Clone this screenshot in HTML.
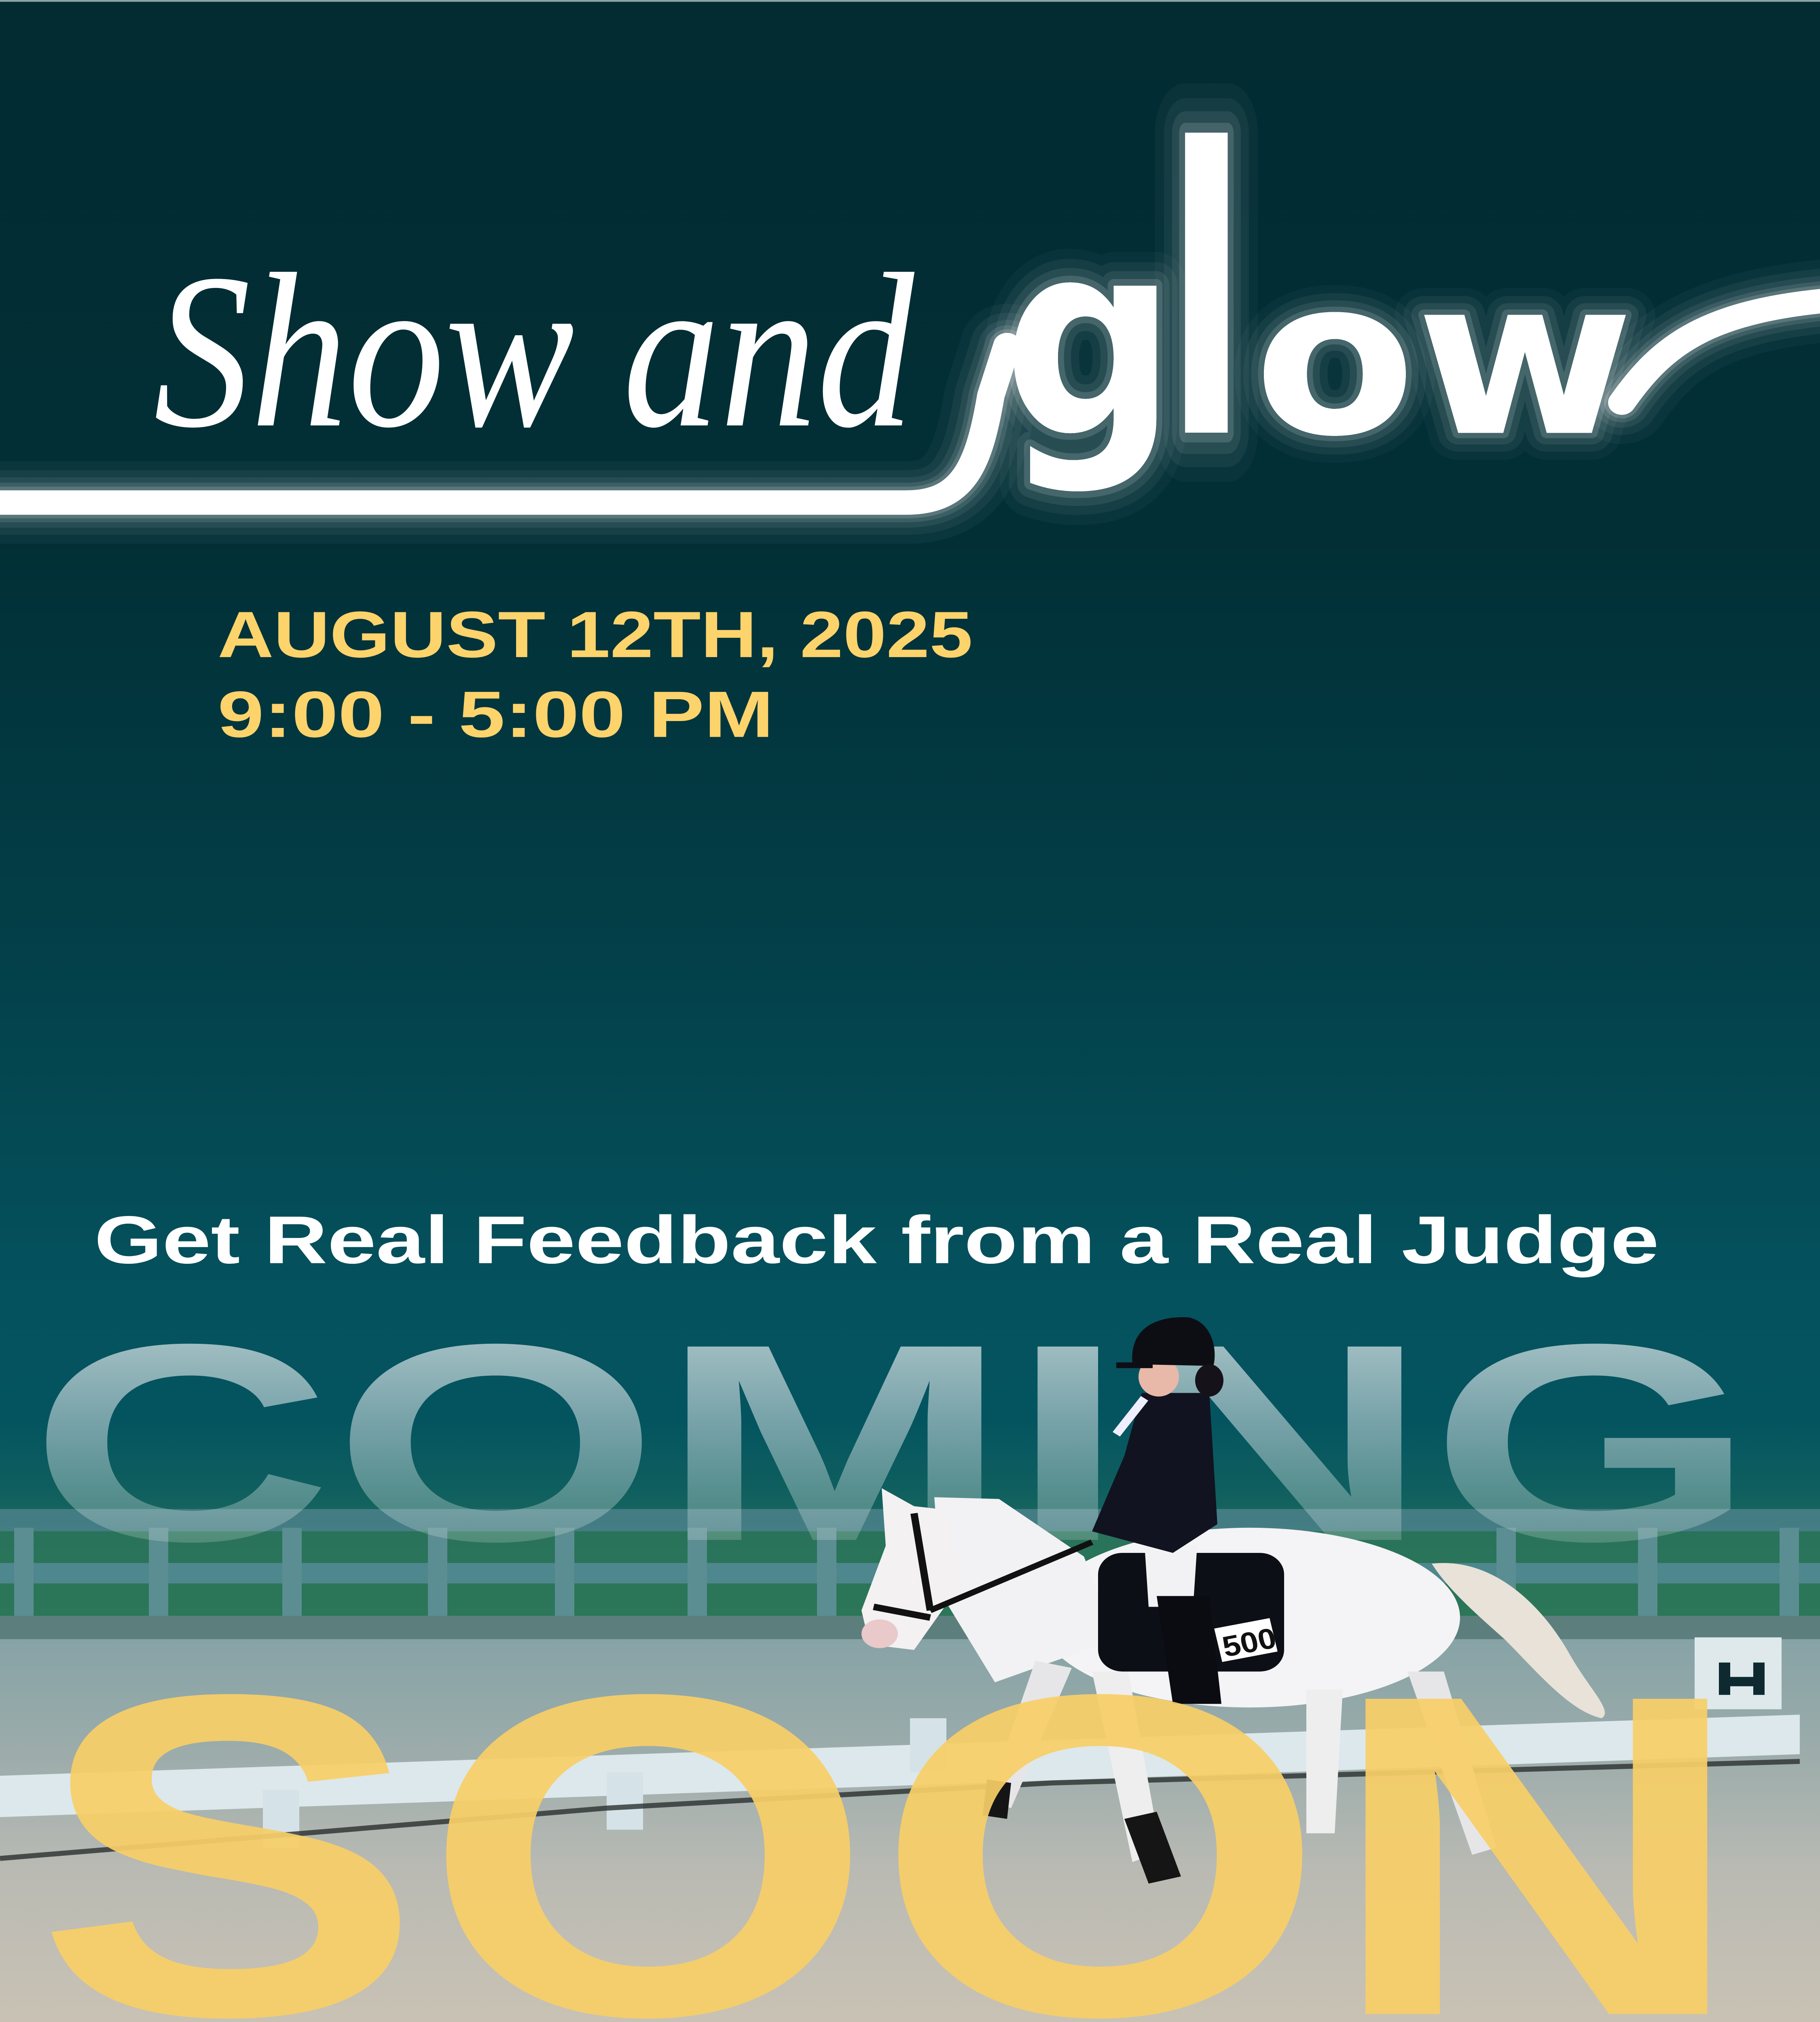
<!DOCTYPE html>
<html><head><meta charset="utf-8"><style>
html,body{margin:0;padding:0;width:100vw;height:100vh;overflow:hidden;background:#045460;}
svg{position:absolute;left:0;top:0;display:block;width:100vw;height:100vh;}
</style></head><body>
<svg viewBox="0 0 4500 5625" preserveAspectRatio="none" xmlns="http://www.w3.org/2000/svg">
<defs>
<linearGradient id="bg" x1="0" y1="0" x2="0" y2="3950" gradientUnits="userSpaceOnUse">
<stop offset="0" stop-color="#022b32"/>
<stop offset="0.38" stop-color="#022f36"/>
<stop offset="0.66" stop-color="#033f48"/>
<stop offset="0.91" stop-color="#04525e"/>
<stop offset="1" stop-color="#045460"/>
</linearGradient>
<linearGradient id="grass" x1="0" y1="3950" x2="0" y2="4510" gradientUnits="userSpaceOnUse">
<stop offset="0" stop-color="#045460"/>
<stop offset="0.35" stop-color="#0f5f5f"/>
<stop offset="0.6" stop-color="#1f6b5e"/>
<stop offset="1" stop-color="#2f7a5b"/>
</linearGradient>
<linearGradient id="sand" x1="0" y1="4560" x2="0" y2="5625" gradientUnits="userSpaceOnUse">
<stop offset="0" stop-color="#87a3a6"/>
<stop offset="0.3" stop-color="#9cacab"/>
<stop offset="0.6" stop-color="#b9bab3"/>
<stop offset="1" stop-color="#c9c2b4"/>
</linearGradient>
<linearGradient id="coming" x1="0" y1="3720" x2="0" y2="4290" gradientUnits="userSpaceOnUse">
<stop offset="0" stop-color="#ffffff" stop-opacity="0.63"/>
<stop offset="0.5" stop-color="#ffffff" stop-opacity="0.42"/>
<stop offset="1" stop-color="#ffffff" stop-opacity="0.18"/>
</linearGradient>
</defs>

<rect x="0" y="0" width="4500" height="3960" fill="url(#bg)"/>
<rect width="4500" height="5" fill="#8aa3a6"/>
<rect x="0" y="3950" width="4500" height="560" fill="url(#grass)"/>
<rect x="0" y="4260" width="4500" height="240" fill="#2c7659" opacity="0.8"/>
<rect x="0" y="4198" width="4500" height="62" fill="#4b8189" opacity="0.85"/>
<rect x="0" y="4348" width="4500" height="57" fill="#528a92" opacity="0.9"/>
<g fill="#5b8e92">
<rect x="35" y="4250" width="48" height="250"/><rect x="368" y="4250" width="48" height="250"/>
<rect x="698" y="4250" width="48" height="250"/><rect x="1058" y="4250" width="48" height="250"/>
<rect x="1372" y="4250" width="48" height="250"/><rect x="1700" y="4250" width="48" height="250"/>
<rect x="2020" y="4250" width="48" height="250"/><rect x="3700" y="4250" width="48" height="250"/>
<rect x="4050" y="4250" width="48" height="250"/><rect x="4400" y="4250" width="48" height="250"/>
</g>
<rect x="0" y="4495" width="4500" height="70" fill="#5c7f7d"/>
<rect x="0" y="4560" width="4500" height="1065" fill="url(#sand)"/>
<polygon points="0,4940 4450,4770 4450,4880 0,5055" fill="#dce8ec"/>
<rect x="650" y="4980" width="90" height="160" fill="#d5e3e8"/>
<rect x="1500" y="4930" width="90" height="160" fill="#d5e3e8"/>
<rect x="2250" y="4780" width="90" height="150" fill="#d5e3e8"/>
<path d="M0,5170 L1500,5030 L2600,4960 L4450,4900" stroke="#2a2f30" stroke-width="14" fill="none" opacity="0.8"/>
<rect x="4190" y="4555" width="215" height="200" fill="#dfe9ec"/>
<rect x="4250" y="4625" width="28" height="90" fill="#0e2a30"/>
<rect x="4335" y="4625" width="28" height="90" fill="#0e2a30"/>
<rect x="4250" y="4665" width="113" height="26" fill="#0e2a30"/>

<!-- title -->
<text x="380" y="1185" font-family="Liberation Serif, serif" font-style="italic" font-size="560" textLength="1880" lengthAdjust="spacingAndGlyphs" fill="#ffffff" transform="translate(0,-120) scale(1,1.1)">Show and</text>
<text x="538" y="1828" font-family="Liberation Sans, sans-serif" font-weight="700" font-size="182" textLength="1867" lengthAdjust="spacingAndGlyphs" fill="#fdd36c">AUGUST 12TH, 2025</text>
<text x="538" y="2050" font-family="Liberation Sans, sans-serif" font-weight="700" font-size="182" textLength="1375" lengthAdjust="spacingAndGlyphs" fill="#fdd36c">9:00 - 5:00 PM</text>

<g fill="none" stroke="#ffffff" stroke-linecap="round" stroke-linejoin="round">
<g stroke-opacity="0.035" stroke-width="230"><path d="M-60,1398 L2240,1398 C2380,1398 2420,1300 2450,1100 L2490,960"/><path d="M4010,1120 C4110,960 4220,860 4560,832"/></g>
<g stroke-opacity="0.05" stroke-width="180"><path d="M-60,1398 L2240,1398 C2380,1398 2420,1300 2450,1100 L2490,960"/><path d="M4010,1120 C4110,960 4220,860 4560,832"/></g>
<g stroke-opacity="0.07" stroke-width="140"><path d="M-60,1398 L2240,1398 C2380,1398 2420,1300 2450,1100 L2490,960"/><path d="M4010,1120 C4110,960 4220,860 4560,832"/></g>
<g stroke-opacity="0.1" stroke-width="110"><path d="M-60,1398 L2240,1398 C2380,1398 2420,1300 2450,1100 L2490,960"/><path d="M4010,1120 C4110,960 4220,860 4560,832"/></g>
<g stroke-opacity="0.15" stroke-width="88"><path d="M-60,1398 L2240,1398 C2380,1398 2420,1300 2450,1100 L2490,960"/><path d="M4010,1120 C4110,960 4220,860 4560,832"/></g>
<g stroke-width="68"><path d="M-60,1398 L2240,1398 C2380,1398 2420,1300 2450,1100 L2490,960"/><path d="M4010,1120 C4110,960 4220,860 4560,832"/></g>
</g>
<g font-family="DejaVu Sans, sans-serif" font-weight="700" font-size="600" fill="#ffffff" stroke="#ffffff" stroke-linejoin="round">
<g stroke-opacity="0.03" stroke-width="150">
<text x="2480" y="1204" transform="translate(0,-300) scale(1,1.25)">g</text>
<text x="2880" y="1204" transform="translate(0,-1000) scale(1,1.83)">l</text>
<text x="3100" y="1204" textLength="940" lengthAdjust="spacingAndGlyphs">ow</text>
</g>
<g stroke-opacity="0.05" stroke-width="105">
<text x="2480" y="1204" transform="translate(0,-300) scale(1,1.25)">g</text>
<text x="2880" y="1204" transform="translate(0,-1000) scale(1,1.83)">l</text>
<text x="3100" y="1204" textLength="940" lengthAdjust="spacingAndGlyphs">ow</text>
</g>
<g stroke-opacity="0.08" stroke-width="65">
<text x="2480" y="1204" transform="translate(0,-300) scale(1,1.25)">g</text>
<text x="2880" y="1204" transform="translate(0,-1000) scale(1,1.83)">l</text>
<text x="3100" y="1204" textLength="940" lengthAdjust="spacingAndGlyphs">ow</text>
</g>
<g stroke-opacity="0.14" stroke-width="30">
<text x="2480" y="1204" transform="translate(0,-300) scale(1,1.25)">g</text>
<text x="2880" y="1204" transform="translate(0,-1000) scale(1,1.83)">l</text>
<text x="3100" y="1204" textLength="940" lengthAdjust="spacingAndGlyphs">ow</text>
</g>
<g stroke-width="0">
<text x="2480" y="1204" transform="translate(0,-300) scale(1,1.25)">g</text>
<text x="2880" y="1204" transform="translate(0,-1000) scale(1,1.83)">l</text>
<text x="3100" y="1204" textLength="940" lengthAdjust="spacingAndGlyphs">ow</text>
</g>
</g>

<text x="233" y="3514" font-family="Liberation Sans, sans-serif" font-weight="700" font-size="188" textLength="3869" lengthAdjust="spacingAndGlyphs" fill="#ffffff">Get Real Feedback from a Real Judge</text>

<text x="72" y="4284" font-family="Liberation Sans, sans-serif" font-weight="700" font-size="782" textLength="4271" lengthAdjust="spacingAndGlyphs" fill="url(#coming)">COMING</text>

<g>
<path d="M3540,4350 C3700,4330 3820,4480 3880,4600 C3930,4700 3990,4760 3960,4780 C3880,4760 3800,4650 3720,4560 C3640,4480 3580,4420 3540,4350 Z" fill="#e8e2d8"/>
<ellipse cx="3090" cy="4500" rx="520" ry="250" fill="#f4f3f5"/>
<polygon points="2310,4165 2470,4170 2680,4330 2760,4560 2460,4680 2330,4440" fill="#f2f1f3"/>
<polygon points="2180,4140 2260,4190 2340,4200 2380,4400 2260,4590 2150,4575 2130,4480 2190,4300" fill="#f3f1f2"/>
<ellipse cx="2175" cy="4545" rx="45" ry="40" fill="#e9c9c9"/>
<path d="M2300,4480 L2700,4290" stroke="#111" stroke-width="16"/>
<path d="M2260,4210 L2300,4480 M2160,4470 L2300,4500" stroke="#111" stroke-width="18" fill="none"/>
<polygon points="2700,4650 2790,4650 2870,5150 2800,5180" fill="#eeeeef"/>
<polygon points="2560,4620 2650,4640 2500,5030 2440,5010" fill="#e6e6e8"/>
<polygon points="3230,4700 3320,4700 3300,5100 3230,5100" fill="#eeeeef"/>
<polygon points="3480,4650 3570,4650 3700,5140 3640,5160" fill="#e6e6e8"/>
<polygon points="2780,5060 2860,5040 2920,5220 2840,5240" fill="#151515"/>
<polygon points="2440,4950 2500,4960 2490,5060 2430,5050" fill="#151515"/>
<rect x="2715" y="4320" width="460" height="330" rx="60" fill="#0d0f16"/>
<rect x="3010" y="4515" width="140" height="95" fill="#fff" transform="rotate(-12 3080 4560)"/>
<text x="3020" y="4598" font-family="Liberation Sans, sans-serif" font-weight="700" font-size="80" fill="#111" transform="rotate(-12 3080 4560)">500</text>
<polygon points="2830,4300 2960,4300 2950,4470 2840,4470" fill="#f2f2f4"/>
<polygon points="2860,4440 2990,4440 3020,4740 2900,4740" fill="#0b0c12"/>
<polygon points="2823,3875 2990,3875 3010,4240 2900,4320 2700,4260 2780,4050" fill="#111320"/>
<path d="M2830,3890 L2760,3990" stroke="#eef" stroke-width="22"/>
<ellipse cx="2865" cy="3830" rx="50" ry="55" fill="#e8b8a8"/>
<path d="M2800,3795 C2790,3680 2880,3660 2940,3665 C3000,3680 3010,3760 3000,3800 Z" fill="#0d0e14"/>
<rect x="2760" y="3790" width="90" height="16" fill="#0d0e14"/>
<ellipse cx="2990" cy="3840" rx="35" ry="45" fill="#15121a"/>
</g>

<text x="86" y="5603" font-family="Liberation Sans, sans-serif" font-weight="700" font-size="1275" textLength="4232" lengthAdjust="spacingAndGlyphs" fill="#f7cf67" fill-opacity="0.93">SOON</text>
</svg>
</body></html>
